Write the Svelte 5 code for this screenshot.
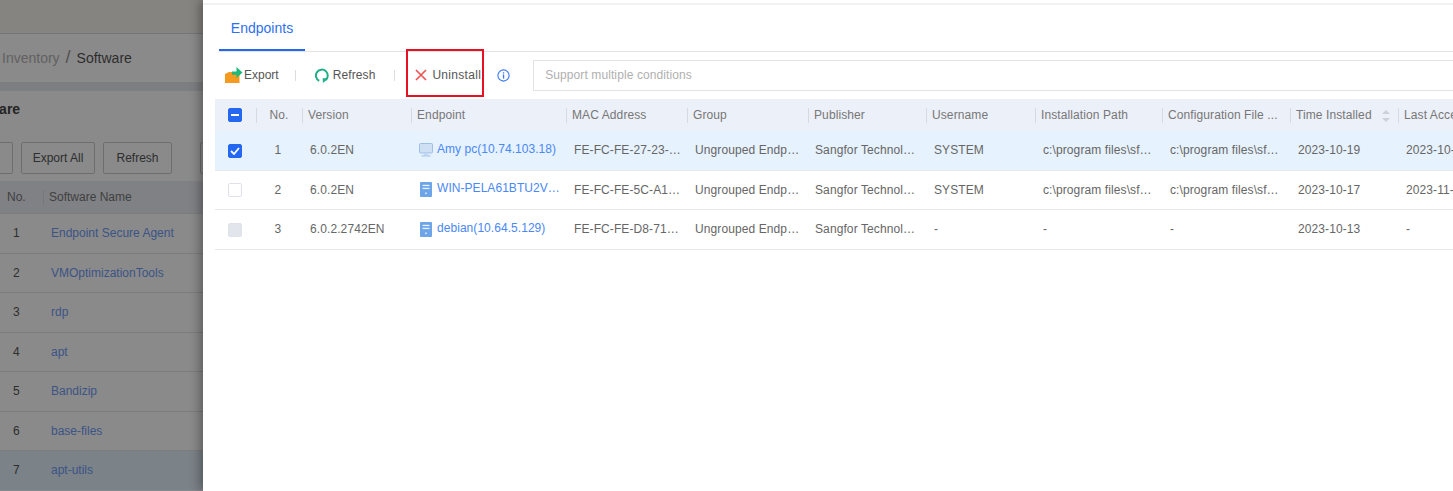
<script>
  const bgRows = [
    ['1', 'Endpoint Secure Agent'],
    ['2', 'VMOptimizationTools'],
    ['3', 'rdp'],
    ['4', 'apt'],
    ['5', 'Bandizip'],
    ['6', 'base-files'],
    ['7', 'apt-utils']
  ];
  const headers = ['Version', 'Endpoint', 'MAC Address', 'Group', 'Publisher', 'Username', 'Installation Path', 'Configuration File ...', 'Time Installed', 'Last Access'];
  const group = 'Ungrouped Endp…';
  const publisher = 'Sangfor Technol…';
  const sfPath = 'c:\\program files\\sf…';
  const rows = [
    { no: '1', state: 'checked', version: '6.0.2EN', icon: 'pc', host: 'Amy pc(10.74.103.18)', mac: 'FE-FC-FE-27-23-…', user: 'SYSTEM', path: sfPath, conf: sfPath, time: '2023-10-19', last: '2023-10-19' },
    { no: '2', state: 'empty', version: '6.0.2EN', icon: 'server', host: 'WIN-PELA61BTU2V…', mac: 'FE-FC-FE-5C-A1…', user: 'SYSTEM', path: sfPath, conf: sfPath, time: '2023-10-17', last: '2023-11-01' },
    { no: '3', state: 'disabled', version: '6.0.2.2742EN', icon: 'server', host: 'debian(10.64.5.129)', mac: 'FE-FC-FE-D8-71…', user: '-', path: '-', conf: '-', time: '2023-10-13', last: '-' }
  ];
</script>

<div class="page">
  <div class="behind">
    <div class="topbar"></div>
    <div class="crumbs"><span class="muted">Inventory</span><span class="slash">/</span><span>Software</span></div>
    <div class="strip"></div>
    <div class="panel">
      <div class="title">Software</div>
      <div class="btns">
        <span class="btn b1"></span>
        <span class="btn b2">Export All</span>
        <span class="btn b3">Refresh</span>
        <span class="btn b4"></span>
      </div>
      <div class="bg-head"><span class="bg-no">No.</span><span class="bg-name">Software Name</span></div>
      {#each bgRows as r, i}
        <div class="bg-row" class:hl={i === 6}><span class="bg-no">{r[0]}</span><span class="bg-link">{r[1]}</span></div>
      {/each}
    </div>
    <div class="scrim"></div>
  </div>

  <div class="drawer">
    <div class="tabs"><span class="tab">Endpoints</span></div>
    <div class="toolbar">
      <span class="tool export">
        <svg width="18" height="17" viewBox="0 0 18 17"><path d="M0 7l4-2h10.500v11H0z" fill="#f59a1f"/><path d="M7 4.500h4.500V0L17.500 5.500 11.500 11V7.800H7z" fill="#1fb878"/></svg>
        Export
      </span>
      <i class="sep"></i>
      <span class="tool refresh">
        <svg width="14" height="15" viewBox="0 0 14 15" fill="none"><path d="M4.200 12.800A5.900 5.900 0 1 1 10.300 12.300" stroke="#1fae86" stroke-width="2"/><path d="M13.500 10.200L7.600 10.200L8 15z" fill="#1fae86"/></svg>
        Refresh
      </span>
      <i class="sep"></i>
      <span class="tool uninstall">
        <svg width="12" height="12" viewBox="0 0 12 12"><path d="M1 1l10 10M11 1L1 11" stroke="#ee5555" stroke-width="1.700"/></svg>
        Uninstall
        <span class="callout"></span>
      </span>
      <svg class="info" width="13" height="13" viewBox="0 0 13 13" fill="none"><circle cx="6.500" cy="6.500" r="5.600" stroke="#3a78f2" stroke-width="1.100"/><rect x="5.900" y="5.400" width="1.300" height="4.200" fill="#3a78f2"/><rect x="5.900" y="3.200" width="1.300" height="1.300" fill="#3a78f2"/></svg>
      <div class="search">Support multiple conditions</div>
    </div>

    <div class="table">
      <div class="row head">
        <div class="cell check"><span class="box indeterminate"></span></div>
        <div class="cell no"><i class="bar"></i>No.</div>
        {#each headers as h, i}
          <div class="cell hcell"><i class="bar"></i><span class="txt">{h}</span>
            {#if i === 8}
              <span class="sort"><i class="up"></i><i class="down"></i></span>
            {/if}
          </div>
        {/each}
      </div>
      {#each rows as r}
        <div class="row body" class:selected={r.state === 'checked'}>
          <div class="cell check">
            <span class="box {r.state}">
              {#if r.state === 'checked'}
                <svg width="10" height="8" viewBox="0 0 10 8" fill="none"><path d="M1 4l3 3 5-6" stroke="#fff" stroke-width="1.800"/></svg>
              {/if}
            </span>
          </div>
          <div class="cell no"><span class="num">{r.no}</span></div>
          <div class="cell c"><span class="txt">{r.version}</span></div>
          <div class="cell c ep">
            {#if r.icon === 'pc'}
              <svg class="ic" width="14" height="14" viewBox="0 0 14 14"><rect x="0.500" y="0.500" width="13" height="9.500" rx="1" fill="#cfe0f5" stroke="#9fbfe8"/><rect x="5" y="10.500" width="4" height="1.800" fill="#c4d8f1"/><rect x="2.500" y="12.300" width="9" height="1.200" fill="#a9c6ea"/></svg>
            {:else}
              <svg class="ic srv" width="12" height="15" viewBox="0 0 12 15"><rect width="12" height="15" rx="1" fill="#6da5e8"/><rect x="2.500" y="2.800" width="7" height="1.300" fill="#e8f1fc"/><rect x="2.500" y="5.800" width="7" height="1.300" fill="#e8f1fc"/><rect x="5.200" y="10.500" width="1.600" height="1.600" fill="#e8f1fc"/></svg>
            {/if}
            <span class="txt link">{r.host}</span>
          </div>
          <div class="cell c"><span class="txt">{r.mac}</span></div>
          <div class="cell c"><span class="txt">{group}</span></div>
          <div class="cell c pub"><span class="txt">{publisher}</span></div>
          <div class="cell c"><span class="txt">{r.user}</span></div>
          <div class="cell c"><span class="txt">{r.path}</span></div>
          <div class="cell c"><span class="txt">{r.conf}</span></div>
          <div class="cell c"><span class="txt">{r.time}</span></div>
          <div class="cell c"><span class="txt">{r.last}</span></div>
        </div>
      {/each}
    </div>
  </div>
</div>

<style>
  :global(body) { margin: 0; background: #fff; }
  .page {
    display: flex;
    width: 1453px;
    height: 491px;
    overflow: hidden;
    font: 12px/1.2 "Liberation Sans", Arial, sans-serif;
    letter-spacing: 0.1px;
    color: #666;
  }

  /* dimmed page behind the drawer */
  .behind { position: relative; flex: 0 0 203px; height: 491px; overflow: hidden; background: #fff; letter-spacing: 0; }
  .scrim { position: absolute; inset: 0; background: rgba(0, 0, 0, .46); }
  .topbar { height: 33px; background: #f7f4ec; border-bottom: 1px solid #d8d8d8; }
  .crumbs { height: 48px; display: flex; align-items: center; gap: 6px; padding-left: 2px; font-size: 14px; color: #555; }
  .muted { color: #b4b4b4; }
  .slash { color: #999; font-size: 18px; }
  .strip { height: 9px; background: #e6e9ee; }
  .panel { background: #fff; }
  .title { height: 51px; line-height: 36px; margin-left: -39px; font-size: 14px; font-weight: 700; color: #444; white-space: nowrap; }
  .btns { display: flex; gap: 8px; margin-left: -60px; height: 39px; white-space: nowrap; }
  .btn { flex: none; box-sizing: border-box; height: 32px; text-align: center; line-height: 30px; border: 1px solid #ccc; border-radius: 2px; color: #555; }
  .b1 { width: 73px; }
  .b2 { width: 74px; }
  .b3 { width: 69px; }
  .b4 { width: 70px; margin-left: 20px; }
  .bg-head { height: 32px; display: flex; align-items: center; background: #eceff5; color: #777; }
  .bg-row { box-sizing: border-box; height: 39.5px; display: flex; align-items: center; border-top: 1px solid #e6e6e6; }
  .bg-row.hl { background: #e4f0fb; }
  .bg-no { flex: 0 0 43px; padding-left: 7px; box-sizing: border-box; }
  .bg-row .bg-no { padding-left: 13px; flex-basis: 44px; color: #555; }
  .bg-name { border-left: 1px solid #ddd; padding-left: 5px; line-height: 15px; }
  .bg-link { margin-left: 7px; color: #6f9cf8; white-space: nowrap; }

  /* drawer */
  .drawer { flex: 1; min-width: 0; height: 491px; background: #fff; box-shadow: -3px 0 10px rgba(0, 0, 0, .35); position: relative; }
  .tabs { margin: 3px 0 0 16px; height: 48px; border-bottom: 1px solid #e3e3e3; position: relative; }
  .tabs::before { content: ""; position: absolute; left: -16px; right: 0; top: 0; height: 2px; background: #f2f2f2; }
  .tab { box-sizing: border-box; display: block; width: 86px; height: 48px; padding-top: 17px; text-align: center; font-size: 14px; letter-spacing: 0; color: #2f70f0; border-bottom: 2px solid #2468f2; }
  .toolbar { height: 47px; display: flex; align-items: center; padding-left: 22px; }
  .tool { display: inline-flex; align-items: center; white-space: nowrap; letter-spacing: 0; color: #555; }
  .sep { width: 1px; height: 11px; background: #ddd; }
  .export { gap: 1px; margin-right: 16px; }
  .refresh { gap: 4px; margin-left: 19px; margin-right: 19px; letter-spacing: 0.1px; }
  .uninstall { gap: 5px; position: relative; margin-left: 20px; letter-spacing: 0.3px; }
  .callout { position: absolute; left: -9px; right: -3px; top: -19px; height: 44px; border: 2px solid #e81123; pointer-events: none; }
  .info { margin-left: 16px; }
  .search { flex: 1; margin-left: 23px; height: 31px; box-sizing: border-box; line-height: 28px; padding-left: 11px; border: 1px solid #e3e3e3; border-right: 0; color: #b0b0b0; }

  .table { margin-left: 12px; }
  .row { display: grid; grid-template-columns: 41px 46px 109px 155px 121px 121px 118px 109px 127px 128px 108px 120px; width: 1238px; }
  .head { height: 32px; background: #ecf0f8; color: #777; }
  .body { box-sizing: border-box; height: 39.5px; border-bottom: 1px solid #e8e8ec; }
  .body.selected { background: #e6f2fd; }
  .cell { display: flex; align-items: center; min-width: 0; position: relative; }
  .check { justify-content: center; padding-right: 1px; }
  .no { justify-content: center; }
  .num { margin-right: 2px; }
  .hcell { padding-left: 6px; }
  .c { padding-left: 8px; }
  .pub { padding-left: 7px; }
  .ep { gap: 4px; }
  .txt { white-space: nowrap; }
  .link { color: #4a88f5; padding-bottom: 3px; letter-spacing: 0.05px; }
  .bar { position: absolute; left: 0; top: 9px; height: 15px; width: 1px; background: #d5d9e2; }
  .ic { flex: none; }
  .srv { margin: 0 1px; }
  .box { box-sizing: border-box; width: 14px; height: 14px; border-radius: 2px; display: flex; align-items: center; justify-content: center; border: 1px solid #dfe2ea; background: #fff; }
  .body .box { margin-top: 1px; }
  .box.indeterminate, .box.checked { background: #2468f2; border-color: #2468f2; }
  .box.indeterminate::after { content: ""; width: 8px; height: 2px; background: #fff; }
  .box.disabled { background: #e2e5ec; }
  .sort { position: absolute; left: 92px; top: 11px; display: flex; flex-direction: column; gap: 4px; }
  .sort i { width: 0; height: 0; border-left: 4px solid transparent; border-right: 4px solid transparent; }
  .up { border-bottom: 4px solid #ccd0d8; }
  .down { border-top: 4px solid #ccd0d8; }
</style>
